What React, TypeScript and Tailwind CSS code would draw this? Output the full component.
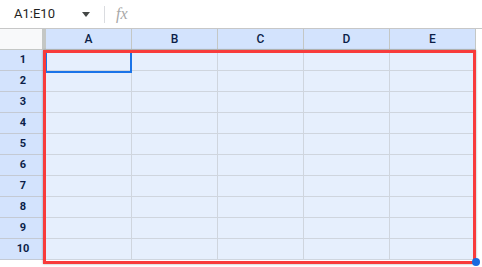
import { Fragment } from 'react';

const cols = ['A', 'B', 'C', 'D', 'E'];
const rows = [1, 2, 3, 4, 5, 6, 7, 8, 9, 10];

export default function App() {
  return (
    <div
      className="relative w-[482px] h-[267px] overflow-hidden bg-white"
      style={{ fontFamily: 'Roboto, "Liberation Sans", sans-serif' }}
    >
      {/* formula bar */}
      <div className="flex h-[29px] items-center border-b border-[#c7c7c7]">
        <div className="w-[82px] pl-[14px] text-[13px] text-[#1f1f1f]">A1:E10</div>
        <div className="h-0 w-0 border-x-[4px] border-t-[5px] border-x-transparent border-t-[#444746]" />
        <div className="ml-[14px] h-[17px] w-px bg-[#dadce0]" />
        <div
          className="ml-[11px] text-[16px] italic text-[#a8a8a8]"
          style={{ fontFamily: '"Liberation Serif", serif' }}
        >
          fx
        </div>
      </div>

      {/* grid */}
      <div className="grid grid-cols-[46px_repeat(5,86px)]">
        <div className="h-[21px] border-r-4 border-b border-[#c4c7c5] bg-[#f8f9fa]" />
        {cols.map((c) => (
          <div
            key={c}
            className="flex h-[21px] items-center justify-center border-r border-b border-[#c4c7c5] bg-[#d3e3fd] text-[12px] font-medium text-[#0b1e49]"
          >
            {c}
          </div>
        ))}
        {rows.map((r) => (
          <Fragment key={r}>
            <div className="flex h-[21px] items-center justify-center border-b border-[#c4cad4] bg-[#d3e3fd] text-[11px] font-bold text-[#0b1e49]">
              {r}
            </div>
            {cols.map((c) => (
              <div
                key={c}
                className="h-[21px] border-r border-b border-[#cfd5de] bg-[#e6effd]"
              />
            ))}
          </Fragment>
        ))}
      </div>

      {/* active cell */}
      <div className="absolute left-[45px] top-[51px] h-[22px] w-[87px] border-2 border-[#1a73e8]" />

      {/* red highlight */}
      <div className="absolute left-[43px] top-[50px] h-[214px] w-[433px] border-[3px] border-[#f83b3b] shadow-[0_0_2px_rgba(0,0,0,0.35)]" />

      {/* fill handle */}
      <div className="absolute left-[472px] top-[258px] h-[8px] w-[8px] rounded-full bg-[#1a6ae0]" />
    </div>
  );
}
